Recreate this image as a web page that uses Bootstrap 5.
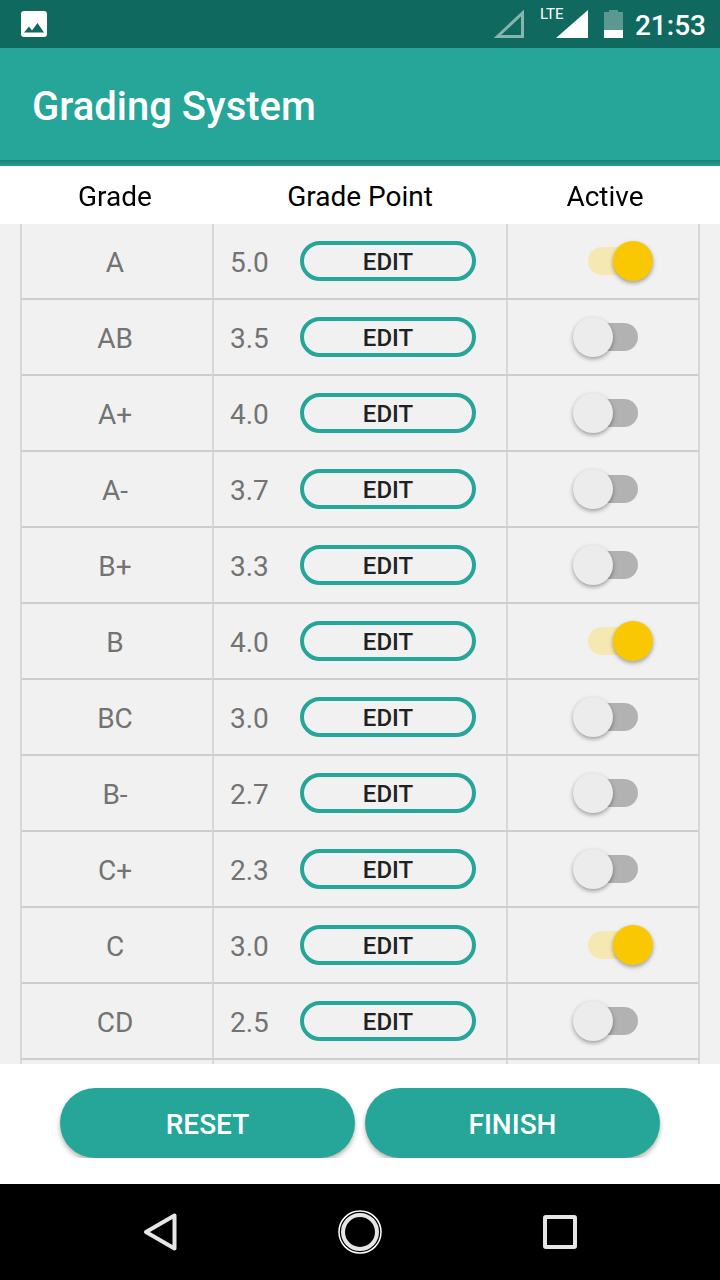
<!DOCTYPE html>
<html lang="en">
<head>
<meta charset="utf-8">
<meta name="viewport" content="width=device-width, initial-scale=1">
<title>Grading System</title>
<link href="https://cdn.jsdelivr.net/npm/bootstrap@5.3.0/dist/css/bootstrap.min.css" rel="stylesheet">
<style>
  :root { --teal: #26a699; --teal-dark: #10695f; --amber: #f9c802; }
  body { font-family: Roboto, "Liberation Sans", sans-serif; font-size: 28px; line-height: 32px; color: #000; }
  .status-bar { height: 48px; background: var(--teal-dark); padding: 0 14px 0 21px; }
  .status-bar time { font-weight: 500; padding: 4px 0 0 12px; }
  .net-label { font-size: 15px; line-height: 16px; top: 6px; left: 0; }
  .app-bar { background: var(--teal); height: 112px; padding: 6px 32px 0; }
  .app-bar h1 { font-size: 40px; line-height: 48px; font-weight: 500; }
  .bar-shadow { height: 6px; background: linear-gradient(#1f7d72, #26a095); }
  .grades { background: #f1f1f1; padding: 0 20px; min-height: 0; overflow: hidden auto; scrollbar-width: none; }
  .grades::-webkit-scrollbar { display: none; }
  .grade-table { table-layout: fixed; border-collapse: separate; border-spacing: 0; }
  .grade-col { width: 192px; }
  .point-col { width: 294px; }
  .grade-table th { background: #fff; height: 58px; font-weight: 400; top: 0; padding: 3px 0 0; }
  .grade-table th:first-child { box-shadow: -20px 0 #fff; padding-right: 2px; }
  .grade-table th:nth-child(2) { padding-left: 2px; }
  .grade-table th:last-child { box-shadow: 20px 0 #fff; padding-left: 4px; }
  .grade-table td { height: 76px; padding: 0; color: #737373; border: solid; border-width: 0 0 2px 2px; border-color: #cdcdcd #d8d8d8; }
  .grade-table td:first-child { padding-top: 4px; padding-right: 4px; }
  .grade-table td:last-child { border-right-width: 2px; padding-left: 20px; }
  .point-value { width: 70px; padding-top: 4px; }
  .btn-edit { width: 176px; height: 40px; padding: 2px 0 0; border: 4px solid var(--teal); color: #212121; font-size: 24px; line-height: 30px; font-weight: 500; }
  .btn-edit:hover { background: #dff0ee; border-color: var(--teal); }
  .toggle { appearance: none; display: inline-grid; align-items: center; width: 80px; height: 40px; margin: 0; vertical-align: middle; cursor: pointer; }
  .toggle::before, .toggle::after { content: ""; grid-area: 1 / 1; }
  .toggle::before { width: 50px; height: 28px; border-radius: 14px; background: #b2b2b2; justify-self: center; }
  .toggle::after { width: 40px; height: 40px; border-radius: 50%; background: #ececec; box-shadow: 0 2px 4px rgba(0,0,0,.35); justify-self: start; }
  .toggle:checked::before { background: #f5e8b3; }
  .toggle:checked::after { background: var(--amber); justify-self: end; }
  .actions { background: #fff; padding: 24px 60px 26px; gap: 10px; }
  .btn-action { height: 70px; padding: 4px 0 0; border: 0; background: var(--teal); color: #fff; font-size: 28px; line-height: 32px; font-weight: 500; box-shadow: 0 3px 5px rgba(0,0,0,.3); clip-path: inset(0 -6px); }
  .btn-action:hover { background: #208f84; color: #fff; }
  .system-nav { height: 96px; background: #000; padding: 0 60px; }
  .system-nav .btn { border: 0; padding: 0; height: 96px; }
</style>
</head>
<body>
<div class="d-flex flex-column vh-100">
  <div class="status-bar d-flex flex-shrink-0 align-items-center text-white">
    <svg width="26" height="26" viewBox="0 0 26 26" aria-hidden="true"><rect width="26" height="26" rx="3" fill="#fff"/><path d="M3 21.500l5-6 3 4 5.500-7.500 6.500 9.500z" fill="#10695f"/></svg>
    <svg class="ms-auto" width="30" height="28" viewBox="0 0 30 28" aria-hidden="true"><path d="M3.500 26.500h25V3z" fill="none" stroke="#87b4af" stroke-width="3"/></svg>
    <div class="position-relative d-flex align-items-center h-100 ms-3">
      <span class="net-label position-absolute">LTE</span>
      <svg class="ms-3" width="32" height="28" viewBox="0 0 32 28" aria-hidden="true"><path d="M0 28h32V0z" fill="#fff"/></svg>
    </div>
    <svg class="ms-3" width="19" height="28" viewBox="0 0 19 28" aria-hidden="true"><path d="M0 2h5V0h9v2h5v26H0z" fill="#5b9891"/><path d="M0 20h19v8H0z" fill="#fff"/></svg>
    <time datetime="21:53">21:53</time>
  </div>
  <header class="app-bar d-flex flex-shrink-0 align-items-center text-white"><h1 class="m-0">Grading System</h1></header>
  <div class="bar-shadow flex-shrink-0"></div>
  <main class="grades flex-fill">
    <table class="grade-table w-100 text-center align-middle">
      <colgroup><col class="grade-col"><col class="point-col"><col></colgroup>
      <thead><tr><th scope="col" class="position-sticky z-1">Grade</th><th scope="col" class="position-sticky z-1">Grade Point</th><th scope="col" class="position-sticky z-1">Active</th></tr></thead>
      <tbody id="grade-rows"></tbody>
    </table>
  </main>
  <div class="actions d-flex flex-shrink-0">
    <button type="button" class="btn btn-action rounded-pill w-50">RESET</button>
    <button type="button" class="btn btn-action rounded-pill w-50">FINISH</button>
  </div>
  <nav class="system-nav d-flex flex-shrink-0" aria-label="System">
    <button type="button" class="btn flex-fill" aria-label="Back"><svg width="44" height="44" viewBox="0 0 44 44"><path d="M36.500 5.500v33L8 22z" fill="none" stroke="#e6e6e6" stroke-width="4" stroke-linejoin="round"/></svg></button>
    <button type="button" class="btn flex-fill" aria-label="Home"><svg width="44" height="44" viewBox="0 0 44 44" fill="none"><circle cx="22" cy="22" r="21" stroke="#fff" stroke-width="1.500"/><circle cx="22" cy="22" r="17" stroke="#e6e6e6" stroke-width="4"/></svg></button>
    <button type="button" class="btn flex-fill" aria-label="Overview"><svg width="44" height="44" viewBox="0 0 44 44"><rect x="7" y="7" width="30" height="30" rx="1" fill="none" stroke="#e6e6e6" stroke-width="4"/></svg></button>
  </nav>
</div>
<script src="https://cdn.jsdelivr.net/npm/bootstrap@5.3.0/dist/js/bootstrap.bundle.min.js"></script>
<script>
  const grades = [
    ["A", "5.0", true], ["AB", "3.5", false], ["A+", "4.0", false], ["A-", "3.7", false],
    ["B+", "3.3", false], ["B", "4.0", true], ["BC", "3.0", false], ["B-", "2.7", false],
    ["C+", "2.3", false], ["C", "3.0", true], ["CD", "2.5", false]
  ];
  document.getElementById("grade-rows").innerHTML = grades.map(([name, point, active]) => `
    <tr>
      <td>${name}</td>
      <td><div class="d-flex align-items-center ps-3 text-start">
        <span class="point-value">${point}</span>
        <button type="button" class="btn btn-edit rounded-pill" aria-label="EDIT ${name}">EDIT</button>
      </div></td>
      <td><input type="checkbox" role="switch" class="toggle" aria-label="${name} active"${active ? " checked" : ""}></td>
    </tr>`).join("") + "<tr><td></td><td></td><td></td></tr>";
</script>
</body>
</html>
